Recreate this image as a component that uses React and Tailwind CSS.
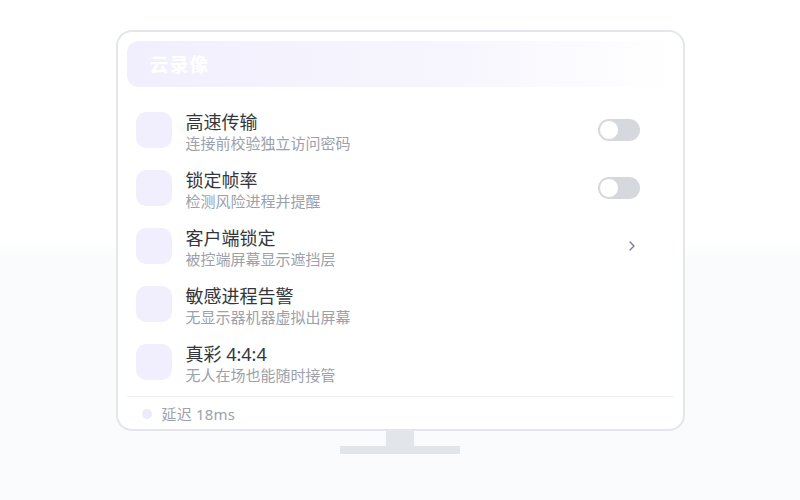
import React from 'react';

const rows = [
  { title: '高速传输', desc: '连接前校验独立访问密码', action: 'toggle' },
  { title: '锁定帧率', desc: '检测风险进程并提醒', action: 'toggle' },
  { title: '客户端锁定', desc: '被控端屏幕显示遮挡层', action: 'chevron' },
  { title: '敏感进程告警', desc: '无显示器机器虚拟出屏幕' },
  { title: '真彩 4:4:4', desc: '无人在场也能随时接管' },
];

function Toggle() {
  return (
    <div className="w-[42px] h-[22px] rounded-full bg-[#d5d8dd] p-px flex items-center">
      <div className="w-5 h-5 rounded-full bg-white border border-[#d5d8dd]" />
    </div>
  );
}

function Chevron() {
  return (
    <svg width="8" height="12" viewBox="0 0 8 12" fill="none" className="mr-[4px]">
      <path d="M2 2l4 4-4 4" stroke="#7b8190" strokeWidth="1.4" strokeLinecap="round" strokeLinejoin="round" />
    </svg>
  );
}

export default function App() {
  return (
    <div
      className="w-[800px] h-[500px] flex flex-col items-center pt-[30px] bg-[linear-gradient(to_bottom,#ffffff_48%,#fafbfc_52%)]"
      style={{ fontFamily: '"Noto Sans", "Noto Sans CJK SC", sans-serif' }}
    >
      {/* screen */}
      <div className="w-[569px] h-[401px] rounded-2xl border-2 border-[#e3e6ea] bg-white p-[9px] flex flex-col">
        <div className="h-[46px] shrink-0 rounded-xl bg-[linear-gradient(to_right,#f1effd,#f7f6fe_60%,#ffffff)] flex items-center px-[23px] pt-[3px]">
          <span className="text-[19px] font-bold text-white tracking-[1px]">云录像</span>
        </div>

        <div className="mt-[14px] flex flex-col">
          {rows.map((row) => (
            <div key={row.title} className="h-[58px] pt-[10px] px-[9px] flex items-start">
              <div className="mt-px w-9 h-9 rounded-[10px] bg-[#f1effd] shrink-0" />
              <div className="ml-[14px] flex-1 flex flex-col">
                <span className="text-[18px] leading-[22px] text-[#33373d]">{row.title}</span>
                <span className="text-[15px] leading-[20px] text-[#9ca1aa]">{row.desc}</span>
              </div>
              <div className="mt-px h-9 flex items-center mr-[25px]">
                {row.action === 'toggle' && <Toggle />}
                {row.action === 'chevron' && <Chevron />}
              </div>
            </div>
          ))}
        </div>

        <div className="mt-[5px] border-t border-[#eef0f3] flex-1 flex items-center px-[15px] pt-[6px]">
          <div className="w-[10px] h-[10px] rounded-full bg-[#ecebfb]" />
          <span className="ml-[10px] text-[15px] tracking-[0.2px] text-[#9ca1aa]">延迟 18ms</span>
        </div>
      </div>

      {/* stand */}
      <div className="w-[28px] h-[15px] bg-[#e2e5e9]" />
      <div className="w-[120px] h-[8px] bg-[#e2e5e9]" />
    </div>
  );
}
